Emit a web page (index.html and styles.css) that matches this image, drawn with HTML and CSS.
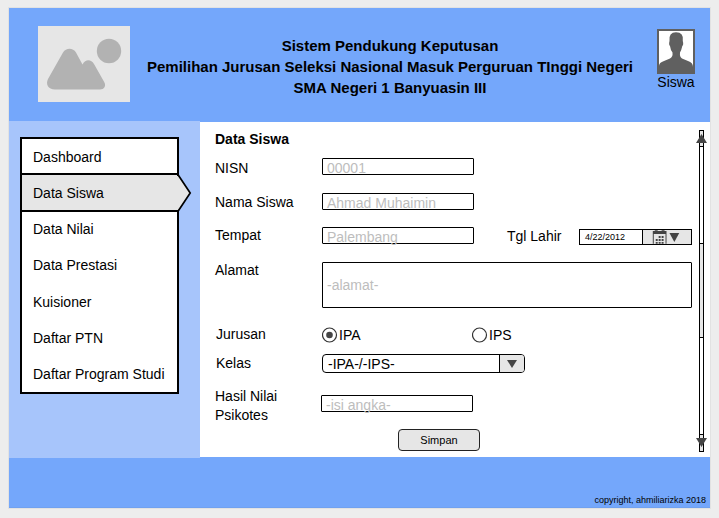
FILE: index.html
```html
<!DOCTYPE html>
<html lang="id">
<head>
<meta charset="utf-8">
<title>Data Siswa</title>
<link rel="stylesheet" href="styles.css">
</head>
<body>
<div class="page">
  <header class="header">
    <svg class="logo" width="92" height="76" viewBox="0 0 92 76">
      <rect width="92" height="76" fill="#e6e6e6"/>
      <circle cx="71" cy="25" r="12.2" fill="#b2b2b2"/>
      <path d="M10 53 L25 26.500 C28 21.500 35 21.500 38 26.500 L44.500 38.500 C47.500 33 53 33 56 38 L66.200 56 C68.500 60 66 63.500 62 63.500 H17 C10 63.500 7.500 58 10 53 Z" fill="#b2b2b2"/>
    </svg>
    <h1 class="heading">Sistem Pendukung Keputusan<br>Pemilihan Jurusan Seleksi Nasional Masuk Perguruan TInggi Negeri<br>SMA Negeri 1 Banyuasin III</h1>
    <div class="user">
      <svg class="avatar" width="38" height="45" viewBox="0 0 38 45">
        <rect x="1" y="1" width="36" height="43" fill="#fff" stroke="#606060" stroke-width="2"/>
        <path d="M2 44 V37 Q2 33.500 7 32 L13 29.500 Q16 28 15.500 23.500 Q13.500 21 13 17 Q11.500 16 12.500 12 Q11.500 3.300 19 3.300 Q27 3.300 25.800 12 Q26.800 16 25.300 17 Q24.500 21 23 23.500 Q22.500 28 25 29.500 L31 32 Q36 33.500 36 38 V44 Z" fill="#606060"/>
      </svg>
      <span>Siswa</span>
    </div>
  </header>
  <div class="body">
    <aside class="sidebar">
      <nav class="menu">
        <a class="item">Dashboard</a>
        <a class="item active">Data Siswa<svg class="pointer" width="15" height="38" viewBox="0 0 15 38"><path d="M0 2 H1.500 L13.200 19 L1.500 36 H0 Z" fill="#e6e6e6"/><path d="M1.200 1 L13.200 19 L1.200 37" fill="none" stroke="#000" stroke-width="1.700"/></svg></a>
        <a class="item">Data Nilai</a>
        <a class="item">Data Prestasi</a>
        <a class="item">Kuisioner</a>
        <a class="item">Daftar PTN</a>
        <a class="item">Daftar Program Studi</a>
      </nav>
    </aside>
    <main class="content">
      <form class="form">
        <h2 class="title">Data Siswa</h2>
        <div class="row nisn"><span class="label">NISN</span><div class="field">00001</div></div>
        <div class="row nama"><span class="label">Nama Siswa</span><div class="field">Ahmad Muhaimin</div></div>
        <div class="row tempat"><span class="label">Tempat</span><div class="field">Palembang</div>
          <span class="date-label">Tgl Lahir</span>
          <div class="date"><span class="date-value">4/22/2012</span>
            <svg class="date-icon" width="49" height="14" viewBox="0 0 49 14">
              <path d="M10 1 H24 V4 H10 Z M10 4 H11 V14 H10 Z M23 4 H24 V14 H23 Z M12 0h3v2h-3z M19 0h3v2h-3z" fill="#444"/>
              <path d="M16 6h2v2h-2z M19 6h2v2h-2z M13 9h2v2h-2z M16 9h2v2h-2z M19 9h2v2h-2z M13 12h2v2h-2z M16 12h2v2h-2z M19 12h2v2h-2z" fill="#444"/>
              <path d="M27 3 H37 L32 12 Z" fill="#444"/>
            </svg>
          </div>
        </div>
        <div class="row alamat"><span class="label">Alamat</span><div class="field area">-alamat-</div></div>
        <div class="row jurusan"><span class="label">Jurusan</span>
          <span class="radio"><svg width="16" height="16" viewBox="0 0 16 16"><circle cx="7.500" cy="8" r="7" fill="#fff" stroke="#333" stroke-width="1.200"/><circle cx="7.500" cy="8" r="3.300" fill="#444"/></svg>IPA</span>
          <span class="radio"><svg width="16" height="16" viewBox="0 0 16 16"><circle cx="7.500" cy="8" r="7" fill="#fff" stroke="#333" stroke-width="1.200"/></svg>IPS</span>
        </div>
        <div class="row kelas"><span class="label">Kelas</span>
          <div class="select"><span class="select-value">-IPA-/-IPS-</span><span class="select-arrow"><svg width="10" height="8" viewBox="0 0 10 8"><path d="M0 0 H10 L5 8 Z" fill="#444"/></svg></span></div>
        </div>
        <div class="row hasil"><span class="label">Hasil Nilai<br>Psikotes</span><div class="field">-isi angka-</div></div>
        <button class="save" type="button">Simpan</button>
      </form>
      <svg class="scrollbar" width="11" height="322" viewBox="0 0 11 322">
        <rect x="3.500" y=".5" width="4" height="321" fill="#fff" stroke="#000"/>
        <path d="M4 1h3v15h-3z M4 114h3v93h-3z M4 305h3v16h-3z" fill="#e6e6e6"/>
        <path d="M3 16.500h5 M3 113.500h5 M3 207.500h5 M3 304.500h5" stroke="#000"/>
        <path d="M0 13 L5.500 4 L11 13 Z M0 308 H11 L5.500 317 Z" fill="#444"/>
      </svg>
    </main>
  </div>
  <footer class="footer">copyright, ahmiliarizka 2018</footer>
</div>
</body>
</html>
```
FILE: styles.css
```css
* { box-sizing: border-box; }
body {
  margin: 0;
  padding: 8px 9px 10px;
  background: #ededed;
  color: #000;
  font: 14px/20px "Liberation Sans", Arial, sans-serif;
}
.page {
  width: 701px;
  height: 500px;
  display: flex;
  flex-direction: column;
  background: #fff;
  box-shadow: 0 0 0 1px #e2e2e2;
}
.header {
  height: 113px;
  display: flex;
  align-items: flex-start;
  background: #74a7fb;
}
.logo { margin: 18px 0 0 29px; flex: none; }
.heading {
  margin: 27px 0 0;
  width: 520px;
  font-size: 15px;
  line-height: 21px;
  text-align: center;
  white-space: nowrap;
}
.user {
  margin: 21px 0 0 1px;
  width: 50px;
  display: flex;
  flex-direction: column;
  align-items: center;
  line-height: 16px;
}
.avatar { display: block; }
.body { height: 337px; display: flex; }
.sidebar { width: 191px; padding: 16px 0 0 11px; background: #a7c5fb; }
.menu {
  width: 159px;
  height: 257px;
  border: 2px solid #000;
  background: #fff;
  display: flex;
  flex-direction: column;
}
.item {
  position: relative;
  flex: 1;
  display: flex;
  align-items: center;
  padding-left: 11px;
  white-space: nowrap;
}
.item:first-child { flex: 0 0 35px; }
.active {
  flex: 0 0 39px;
  margin: -1px 0;
  background: #e6e6e6;
  border: solid #000;
  border-width: 2px 0;
}
.pointer { position: absolute; left: 155px; top: -1px; }
.content {
  width: 510px;
  display: flex;
  background: #fff;
  border-top: 1px solid #74a7fb;
  border-bottom: 1px solid #74a7fb;
}
.form { width: 496px; flex: none; padding: 7px 0 0 15px; }
.title { margin: 0; height: 29px; font-size: 14px; line-height: 20px; }
.row { display: flex; align-items: flex-start; }
.label { width: 107px; flex: none; line-height: 19px; white-space: nowrap; }
.field {
  width: 152px;
  height: 17px;
  border: 1px solid #000;
  border-radius: 1px;
  padding-left: 4px;
  line-height: 19px;
  color: #bdbdbd;
}
.nisn { height: 35px; }
.nama { height: 34px; }
.tempat { height: 35px; }
.alamat { height: 63px; }
.jurusan { height: 29px; }
.kelas { height: 32px; }
.hasil { height: 43px; }
.nisn .label, .hasil .label { line-height: 20px; }
.tempat .label, .alamat .label { line-height: 17px; }
.hasil .label { line-height: 19px; padding-top: 1px; }
.jurusan .label, .kelas .label { padding-left: 1px; }
.date-label { width: 72px; margin-left: 33px; line-height: 19px; }
.date {
  width: 113px;
  height: 16px;
  margin-top: 2px;
  border: 1px solid #000;
  display: flex;
  font-size: 9px;
  line-height: 14px;
}
.date-value { width: 62px; padding-left: 5px; }
.date-icon { background: #e6e6e6; border-left: 1px solid #000; width: 49px; height: 14px; }
.area { width: 370px; height: 46px; line-height: 44px; }
.radio { display: flex; align-items: center; width: 150px; gap: 1px; height: 20px; }
.select {
  width: 203px;
  height: 19px;
  border: 1px solid #000;
  border-radius: 4px;
  display: flex;
  overflow: hidden;
  line-height: 19px;
}
.select-value { flex: 1; padding-left: 5px; }
.select-arrow {
  width: 25px;
  border-left: 1px solid #000;
  background: #e6e6e6;
  display: flex;
  align-items: center;
  justify-content: center;
}
.hasil .label { width: 106px; }
.hasil .field { margin-top: 9px; }
.save {
  display: block;
  width: 82px;
  height: 22px;
  margin-left: 183px;
  padding: 0;
  border: 1px solid #222;
  border-radius: 4px;
  background: #e6e6e6;
  color: #000;
  font: 11px/20px "Liberation Sans", Arial, sans-serif;
}
.scrollbar { margin-top: 8px; flex: none; }
.footer {
  height: 50px;
  padding: 35px 4px 0 0;
  background: #74a7fb;
  border-bottom: 1px solid #70a1f0;
  font-size: 9px;
  line-height: 14px;
  text-align: right;
}
```
